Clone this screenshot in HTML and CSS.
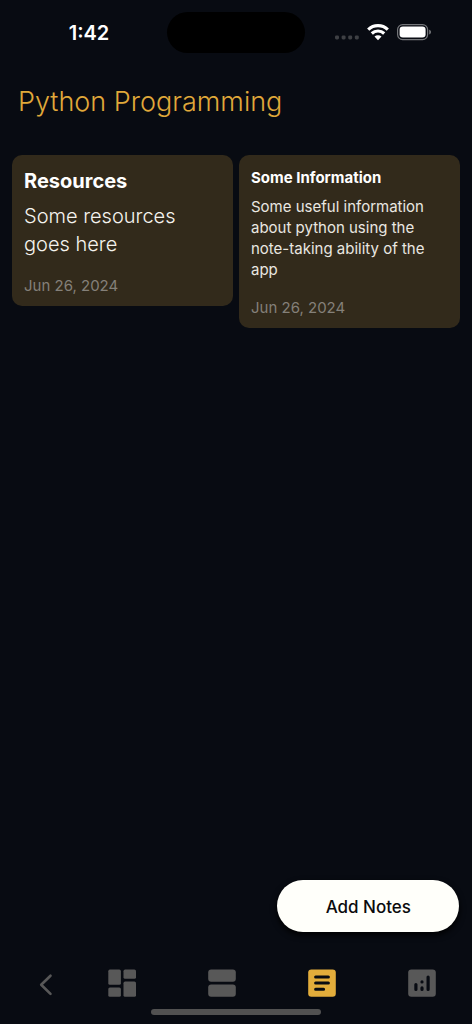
FILE: index.html
```html
<!DOCTYPE html>
<html lang="en">
<head>
<meta charset="utf-8">
<meta name="viewport" content="width=device-width, initial-scale=1">
<title>Python Programming</title>
<link rel="stylesheet" href="styles.css">
</head>
<body>
<div class="app">
  <div class="status">
    <time class="clock">1:42</time>
    <div class="island"></div>
    <div class="indicators">
      <svg width="24" height="20" viewBox="0 0 24 20" fill="#3e4044" aria-hidden="true"><rect y="12.4" width="4" height="4" rx="1.4"/><rect x="6.6" y="12.4" width="4" height="4" rx="1.4"/><rect x="13.2" y="12.4" width="4" height="4" rx="1.4"/><rect x="19.8" y="12.4" width="4" height="4" rx="1.4"/></svg>
      <svg width="22" height="20" viewBox="0 0 22 20" aria-hidden="true"><g fill="none" stroke="#fff" stroke-width="3.2"><path d="M1.2 6.6a14.2 14.2 0 0 1 19.6 0"/><path d="M4.8 10.5a9 9 0 0 1 12.4 0"/></g><path d="M11 17.2l-3.5-3.6a5 5 0 0 1 7 0z" fill="#fff"/></svg>
      <svg width="35" height="20" viewBox="0 0 35 20" aria-hidden="true"><rect x=".6" y="1.6" width="30" height="15" rx="5" fill="none" stroke="#74767a" stroke-width="1.2"/><rect x="2.6" y="3.6" width="26" height="11" rx="3.3" fill="#fff"/><path d="M32.2 6.8c2.4.6 2.4 4 0 4.6z" fill="#74767a"/></svg>
    </div>
  </div>
  <h1 class="title">Python Programming</h1>
  <main class="notes">
    <article class="note note-large">
      <h2 class="note-title">Resources</h2>
      <p class="note-text">Some resources goes here</p>
      <time class="note-date" datetime="2024-06-26">Jun 26, 2024</time>
    </article>
    <article class="note">
      <h2 class="note-title">Some Information</h2>
      <p class="note-text">Some useful information about python using the note-taking ability of the app</p>
      <time class="note-date" datetime="2024-06-26">Jun 26, 2024</time>
    </article>
  </main>
  <button class="add" type="button">Add Notes</button>
  <nav class="tabs">
    <button class="tab tab-back" type="button" aria-label="Back"><svg width="28" height="28" viewBox="0 0 28 28" fill="none" stroke="currentColor" stroke-width="2.6" stroke-linecap="round" stroke-linejoin="round"><path d="M18.5 6.7L9.2 15.8l9.3 9.1"/></svg></button>
    <button class="tab" type="button" aria-label="Dashboard"><svg width="28" height="28" viewBox="0 0 28 28" fill="currentColor"><rect x=".3" y=".6" width="12.6" height="15.2" rx="1.6"/><rect x="15.5" y=".6" width="12.5" height="9.2" rx="1.6"/><rect x=".3" y="18.5" width="12.6" height="9.3" rx="1.6"/><rect x="15.5" y="12.6" width="12.5" height="15.2" rx="1.6"/></svg></button>
    <button class="tab" type="button" aria-label="Cards"><svg width="28" height="28" viewBox="0 0 28 28" fill="currentColor"><rect x=".2" y=".6" width="27.6" height="12.2" rx="3"/><rect x=".2" y="15.6" width="27.6" height="12.2" rx="3"/></svg></button>
    <button class="tab tab-active" type="button" aria-label="Notes" aria-current="page"><svg width="28" height="28" viewBox="0 0 28 28"><rect x=".2" y=".4" width="27.6" height="27.4" rx="3.2" fill="currentColor"/><path d="M7.6 8.1h12.8M7.6 14.1h12.8M7.6 20.2h8" stroke="#080b12" stroke-width="3" stroke-linecap="round"/></svg></button>
    <button class="tab" type="button" aria-label="Statistics"><svg width="28" height="28" viewBox="0 0 28 28"><rect x=".2" y=".4" width="27.6" height="27.4" rx="3.2" fill="currentColor"/><path d="M7.9 15.6v4.8M14 12.9v.01M14 18.9v1.5M20.1 8.1v12.3" stroke="#080b12" stroke-width="3.2" stroke-linecap="round"/></svg></button>
  </nav>
  <div class="home"></div>
</div>
</body>
</html>
```
FILE: styles.css
```css
* {
  box-sizing: border-box;
}

body {
  margin: 0;
  background: #080b12;
  color: #fff;
  font-family: Inter, sans-serif;
}

button {
  border: 0;
  padding: 0;
  font: inherit;
  cursor: pointer;
}

.app {
  display: flex;
  flex-direction: column;
  min-height: 100vh;
}

.status {
  display: grid;
  grid-template-columns: 1fr 138px 1fr;
  align-items: center;
  padding-top: 12px;
}

.clock {
  padding-left: 11px;
  text-align: center;
  font-size: 20px;
  font-weight: 600;
  line-height: 24px;
}

.island {
  height: 41px;
  border-radius: 21px;
  background: #000;
}

.indicators {
  display: flex;
  justify-content: center;
  gap: 8px;
  padding-right: 11px;
}

.indicators svg {
  flex: none;
}

.title {
  margin: 32px 18px 37px;
  color: #e0a93a;
  font-size: 27px;
  font-weight: 300;
  line-height: 33px;
}

.notes {
  display: grid;
  grid-template-columns: 1fr 1fr;
  align-items: start;
  gap: 6px;
  padding: 0 12px;
}

.note {
  padding: 12px 12px 10px;
  border-radius: 10px;
  background: #322a1b;
}

.note-title {
  margin: 0 0 8px;
  font-size: 15px;
  font-weight: 700;
  line-height: 21px;
}

.note-text {
  margin: 0 0 18px;
  color: #e9e7e1;
  font-size: 15px;
  font-weight: 400;
  line-height: 21px;
}

.note-date {
  display: block;
  color: #848079;
  font-size: 15px;
  font-weight: 400;
  line-height: 20px;
}

.note-large .note-title {
  margin-bottom: 7px;
  font-size: 20px;
  line-height: 28px;
}

.note-large .note-text {
  color: #f5f3ee;
  font-size: 20px;
  font-weight: 300;
  line-height: 28px;
}

.add {
  align-self: flex-end;
  margin: auto 13px 0;
  padding: 15px 48px 13px 49px;
  border-radius: 26px;
  background: #fffffa;
  color: #0b0b0d;
  font-size: 17px;
  font-weight: 500;
  line-height: 24px;
  box-shadow: 0 3px 6px #000;
}

.tabs {
  display: grid;
  grid-template-columns: 72px repeat(4, 1fr);
  padding-top: 32px;
}

.tab {
  display: flex;
  justify-content: center;
  padding: 5px 0 7px;
  background: none;
  color: #585858;
}

.tab-back {
  padding-left: 20px;
}

.tab-active {
  color: #e3ad3b;
}

.home {
  align-self: center;
  width: 36%;
  height: 6px;
  margin: 5px 0 9px;
  border-radius: 3px;
  background: #515151;
}
```
